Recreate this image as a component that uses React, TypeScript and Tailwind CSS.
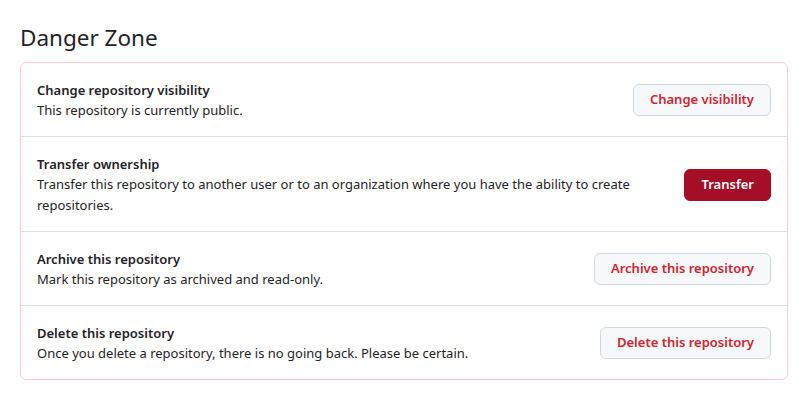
import React from 'react';

type Row = {
  title: string;
  desc: string;
  action: string;
  primary?: boolean;
};

const rows: Row[] = [
  { title: 'Change repository visibility', desc: 'This repository is currently public.', action: 'Change visibility' },
  {
    title: 'Transfer ownership',
    desc: 'Transfer this repository to another user or to an organization where you have the ability to create repositories.',
    action: 'Transfer',
    primary: true,
  },
  { title: 'Archive this repository', desc: 'Mark this repository as archived and read-only.', action: 'Archive this repository' },
  { title: 'Delete this repository', desc: 'Once you delete a repository, there is no going back. Please be certain.', action: 'Delete this repository' },
];

const App = () => {
  return (
    <div className="min-h-screen bg-white pl-5 pr-[22px] pt-5 text-[#1f2328] font-['Segoe_UI','Noto_Sans',sans-serif]">
      {/* Heading */}
      <h2 className="mb-1.5 text-[22.5px] leading-9 font-normal">Danger Zone</h2>

      {/* Box */}
      <div className="rounded-md border border-[#ffcecb]">
        {rows.map((row, i) => (
          <div
            key={row.title}
            className={`flex items-center gap-4 px-4 pt-4 pb-[15px] text-[13px] ${i > 0 ? 'border-t border-[#d8dee4]' : ''}`}
          >
            <div className="flex-auto pt-px">
              <div className="font-semibold leading-5">{row.title}</div>
              <p className="leading-[21px]">{row.desc}</p>
            </div>
            {row.primary ? (
              <button className="h-8 shrink-0 rounded-md border border-[#a40e26] bg-[#a40e26] px-4 text-[13px] font-semibold text-white">
                {row.action}
              </button>
            ) : (
              <button className="h-8 shrink-0 rounded-md border border-[#d1d9e0] bg-[#f6f8fa] px-4 text-[13px] font-semibold text-[#d1242f]">
                {row.action}
              </button>
            )}
          </div>
        ))}
      </div>
    </div>
  );
};

export default App;
